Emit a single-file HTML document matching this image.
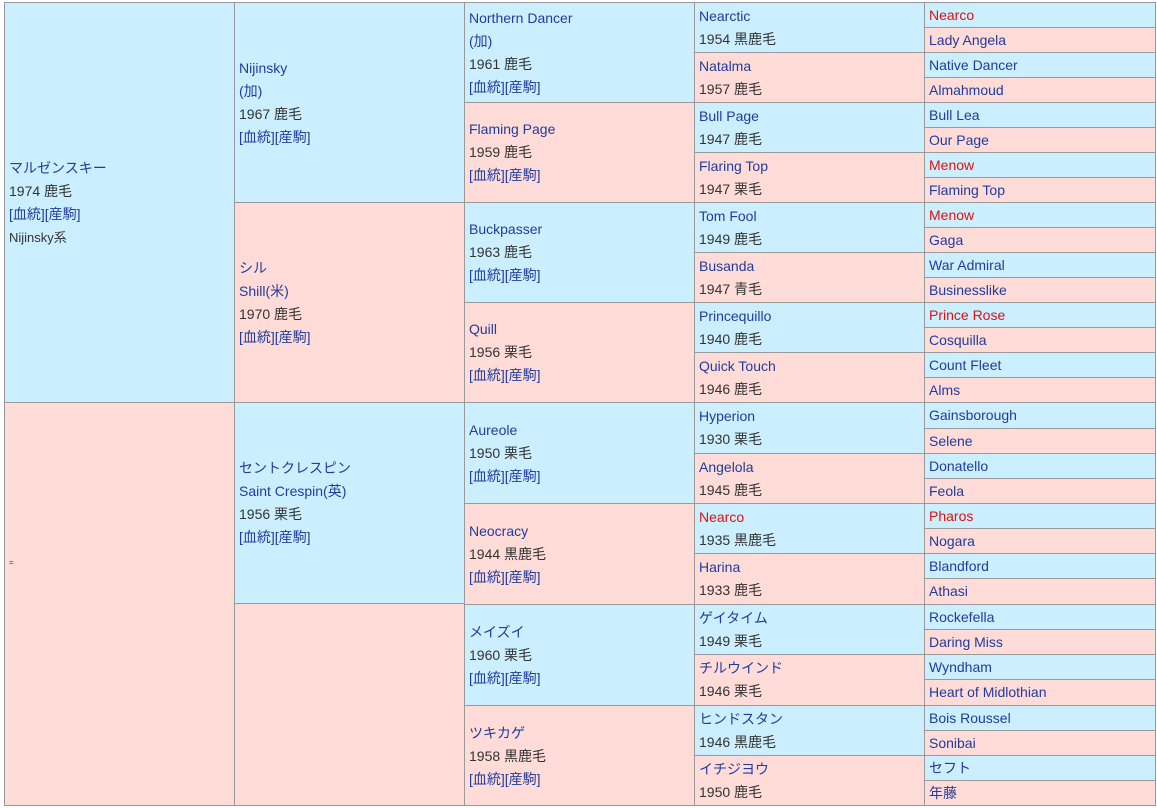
<!DOCTYPE html>
<html><head><meta charset="utf-8"><style>
body{margin:0;background:#fff;width:1157px;height:808px;overflow:hidden;font-family:"Liberation Sans","Noto Sans CJK JP",sans-serif;font-size:14px;color:#333}
.c{position:absolute;box-sizing:border-box;border-left:1px solid #999;border-top:1px solid #999;display:flex;flex-direction:column;justify-content:center;padding-left:4px;line-height:23px;white-space:nowrap}
.b{background:#ccefff}.p{background:#ffdcd8}
a,.l{color:#203c9c;text-decoration:none}
.r{color:#dd1111}
.s{font-size:13px;color:#333}
#box{position:absolute;left:4px;top:2px;width:1152px;height:804px;border-right:1px solid #999;border-bottom:1px solid #999;box-sizing:border-box;z-index:5}
</style></head><body>
<div id="box"></div>
<div class="c b" style="left:4px;top:2px;width:231px;height:400px"><span class="l">マルゼンスキー</span><span>1974 鹿毛</span><span class="l">[血統][産駒]</span><span class="s">Nijinsky系</span></div>
<div class="c p" style="left:4px;top:402px;width:231px;height:404px"><span class="l" style="font-size:8px;position:relative;top:-42px">=</span></div>
<div class="c b" style="left:234px;top:2px;width:231px;height:200px"><span class="l">Nijinsky</span><span class="l">(加)</span><span>1967 鹿毛</span><span class="l">[血統][産駒]</span></div>
<div class="c p" style="left:234px;top:202px;width:231px;height:200px"><span class="l">シル</span><span class="l">Shill(米)</span><span>1970 鹿毛</span><span class="l">[血統][産駒]</span></div>
<div class="c b" style="left:234px;top:402px;width:231px;height:201px"><span class="l">セントクレスピン</span><span class="l">Saint Crespin(英)</span><span>1956 栗毛</span><span class="l">[血統][産駒]</span></div>
<div class="c p" style="left:234px;top:603px;width:231px;height:203px"></div>
<div class="c b" style="left:464px;top:2px;width:231px;height:100px"><span class="l">Northern Dancer</span><span class="l">(加)</span><span>1961 鹿毛</span><span class="l">[血統][産駒]</span></div>
<div class="c p" style="left:464px;top:102px;width:231px;height:100px"><span class="l">Flaming Page</span><span>1959 鹿毛</span><span class="l">[血統][産駒]</span></div>
<div class="c b" style="left:464px;top:202px;width:231px;height:100px"><span class="l">Buckpasser</span><span>1963 鹿毛</span><span class="l">[血統][産駒]</span></div>
<div class="c p" style="left:464px;top:302px;width:231px;height:100px"><span class="l">Quill</span><span>1956 栗毛</span><span class="l">[血統][産駒]</span></div>
<div class="c b" style="left:464px;top:402px;width:231px;height:101px"><span class="l">Aureole</span><span>1950 栗毛</span><span class="l">[血統][産駒]</span></div>
<div class="c p" style="left:464px;top:503px;width:231px;height:101px"><span class="l">Neocracy</span><span>1944 黒鹿毛</span><span class="l">[血統][産駒]</span></div>
<div class="c b" style="left:464px;top:604px;width:231px;height:101px"><span class="l">メイズイ</span><span>1960 栗毛</span><span class="l">[血統][産駒]</span></div>
<div class="c p" style="left:464px;top:705px;width:231px;height:101px"><span class="l">ツキカゲ</span><span>1958 黒鹿毛</span><span class="l">[血統][産駒]</span></div>
<div class="c b" style="left:694px;top:2px;width:231px;height:50px"><span class="l">Nearctic</span><span>1954 黒鹿毛</span></div>
<div class="c p" style="left:694px;top:52px;width:231px;height:50px"><span class="l">Natalma</span><span>1957 鹿毛</span></div>
<div class="c b" style="left:694px;top:102px;width:231px;height:50px"><span class="l">Bull Page</span><span>1947 鹿毛</span></div>
<div class="c p" style="left:694px;top:152px;width:231px;height:50px"><span class="l">Flaring Top</span><span>1947 栗毛</span></div>
<div class="c b" style="left:694px;top:202px;width:231px;height:50px"><span class="l">Tom Fool</span><span>1949 鹿毛</span></div>
<div class="c p" style="left:694px;top:252px;width:231px;height:50px"><span class="l">Busanda</span><span>1947 青毛</span></div>
<div class="c b" style="left:694px;top:302px;width:231px;height:50px"><span class="l">Princequillo</span><span>1940 鹿毛</span></div>
<div class="c p" style="left:694px;top:352px;width:231px;height:50px"><span class="l">Quick Touch</span><span>1946 鹿毛</span></div>
<div class="c b" style="left:694px;top:402px;width:231px;height:51px"><span class="l">Hyperion</span><span>1930 栗毛</span></div>
<div class="c p" style="left:694px;top:453px;width:231px;height:50px"><span class="l">Angelola</span><span>1945 鹿毛</span></div>
<div class="c b" style="left:694px;top:503px;width:231px;height:50px"><span class="r">Nearco</span><span>1935 黒鹿毛</span></div>
<div class="c p" style="left:694px;top:553px;width:231px;height:51px"><span class="l">Harina</span><span>1933 鹿毛</span></div>
<div class="c b" style="left:694px;top:604px;width:231px;height:50px"><span class="l">ゲイタイム</span><span>1949 栗毛</span></div>
<div class="c p" style="left:694px;top:654px;width:231px;height:51px"><span class="l">チルウインド</span><span>1946 栗毛</span></div>
<div class="c b" style="left:694px;top:705px;width:231px;height:50px"><span class="l">ヒンドスタン</span><span>1946 黒鹿毛</span></div>
<div class="c p" style="left:694px;top:755px;width:231px;height:51px"><span class="l">イチジヨウ</span><span>1950 鹿毛</span></div>
<div class="c b" style="left:924px;top:2px;width:232px;height:25px"><span class="r">Nearco</span></div>
<div class="c p" style="left:924px;top:27px;width:232px;height:25px"><span class="l">Lady Angela</span></div>
<div class="c b" style="left:924px;top:52px;width:232px;height:25px"><span class="l">Native Dancer</span></div>
<div class="c p" style="left:924px;top:77px;width:232px;height:25px"><span class="l">Almahmoud</span></div>
<div class="c b" style="left:924px;top:102px;width:232px;height:25px"><span class="l">Bull Lea</span></div>
<div class="c p" style="left:924px;top:127px;width:232px;height:25px"><span class="l">Our Page</span></div>
<div class="c b" style="left:924px;top:152px;width:232px;height:25px"><span class="r">Menow</span></div>
<div class="c p" style="left:924px;top:177px;width:232px;height:25px"><span class="l">Flaming Top</span></div>
<div class="c b" style="left:924px;top:202px;width:232px;height:25px"><span class="r">Menow</span></div>
<div class="c p" style="left:924px;top:227px;width:232px;height:25px"><span class="l">Gaga</span></div>
<div class="c b" style="left:924px;top:252px;width:232px;height:25px"><span class="l">War Admiral</span></div>
<div class="c p" style="left:924px;top:277px;width:232px;height:25px"><span class="l">Businesslike</span></div>
<div class="c b" style="left:924px;top:302px;width:232px;height:25px"><span class="r">Prince Rose</span></div>
<div class="c p" style="left:924px;top:327px;width:232px;height:25px"><span class="l">Cosquilla</span></div>
<div class="c b" style="left:924px;top:352px;width:232px;height:25px"><span class="l">Count Fleet</span></div>
<div class="c p" style="left:924px;top:377px;width:232px;height:25px"><span class="l">Alms</span></div>
<div class="c b" style="left:924px;top:402px;width:232px;height:26px"><span class="l">Gainsborough</span></div>
<div class="c p" style="left:924px;top:428px;width:232px;height:25px"><span class="l">Selene</span></div>
<div class="c b" style="left:924px;top:453px;width:232px;height:25px"><span class="l">Donatello</span></div>
<div class="c p" style="left:924px;top:478px;width:232px;height:25px"><span class="l">Feola</span></div>
<div class="c b" style="left:924px;top:503px;width:232px;height:25px"><span class="r">Pharos</span></div>
<div class="c p" style="left:924px;top:528px;width:232px;height:25px"><span class="l">Nogara</span></div>
<div class="c b" style="left:924px;top:553px;width:232px;height:25px"><span class="l">Blandford</span></div>
<div class="c p" style="left:924px;top:578px;width:232px;height:26px"><span class="l">Athasi</span></div>
<div class="c b" style="left:924px;top:604px;width:232px;height:25px"><span class="l">Rockefella</span></div>
<div class="c p" style="left:924px;top:629px;width:232px;height:25px"><span class="l">Daring Miss</span></div>
<div class="c b" style="left:924px;top:654px;width:232px;height:25px"><span class="l">Wyndham</span></div>
<div class="c p" style="left:924px;top:679px;width:232px;height:26px"><span class="l">Heart of Midlothian</span></div>
<div class="c b" style="left:924px;top:705px;width:232px;height:25px"><span class="l">Bois Roussel</span></div>
<div class="c p" style="left:924px;top:730px;width:232px;height:25px"><span class="l">Sonibai</span></div>
<div class="c b" style="left:924px;top:755px;width:232px;height:25px"><span class="l">セフト</span></div>
<div class="c p" style="left:924px;top:780px;width:232px;height:26px"><span class="l">年藤</span></div>
</body></html>
